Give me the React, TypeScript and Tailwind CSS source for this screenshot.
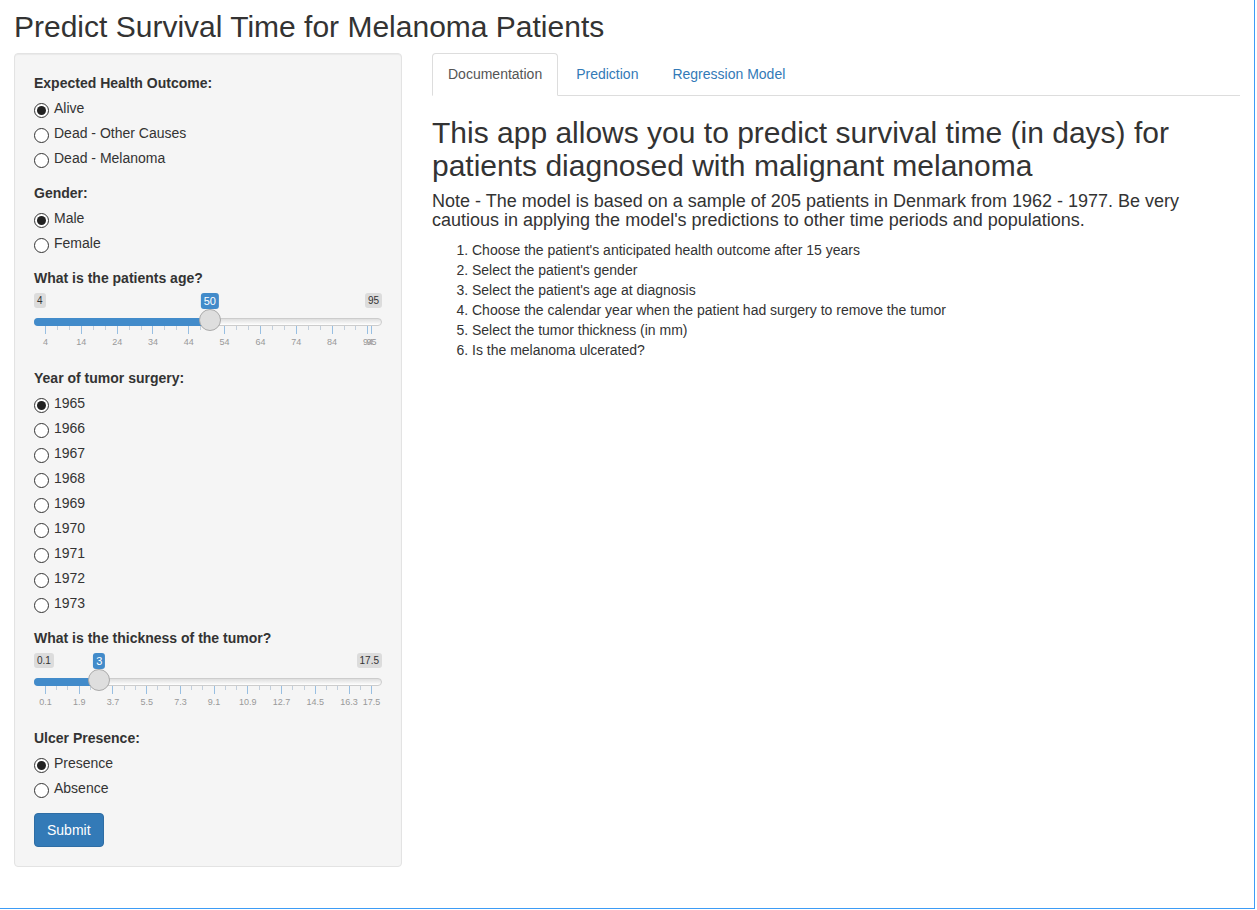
type SliderProps = {
  min: number;
  max: number;
  value: number;
  step: number;
  fmt: (v: number) => string;
};

function Slider({ min, max, value, step, fmt }: SliderProps) {
  const pos = (v: number) => 11 + ((v - min) / (max - min)) * 326;

  const majors: number[] = [];
  for (let v = min; v <= max + 1e-6; v += step) majors.push(v);
  if (Math.abs(majors[majors.length - 1] - max) > 1e-6) majors.push(max);

  const minors: number[] = [];
  for (let i = 0; i < majors.length - 1; i++) {
    for (const k of [1, 2]) {
      const v = majors[i] + (step * k) / 3;
      if (v < majors[i + 1] - 1e-6) minors.push(v);
    }
  }

  return (
    <div className="relative h-[60px] w-[348px]">
      <span className="absolute left-0 top-0 rounded-[3px] bg-black/10 px-[3px] py-px text-[10px] leading-[13px] text-[#333]">
        {fmt(min)}
      </span>
      <span className="absolute right-0 top-0 rounded-[3px] bg-black/10 px-[3px] py-px text-[10px] leading-[13px] text-[#333]">
        {fmt(max)}
      </span>

      <div className="absolute left-0 right-0 top-[25px] h-2 rounded-full border border-[#ccc] bg-gradient-to-b from-[#dedede] to-white" />
      <div
        className="absolute left-0 top-[25px] h-2 rounded-l-full bg-[#428bca]"
        style={{ width: pos(value) }}
      />

      {minors.map((v) => (
        <div
          key={"m" + v}
          className="absolute top-[33px] h-1 w-px bg-[#c3cfdc]"
          style={{ left: Math.round(pos(v)) }}
        />
      ))}
      {majors.map((v) => (
        <div
          key={"M" + v}
          className="absolute top-[33px] h-2 w-px bg-[#98bfe2]"
          style={{ left: Math.round(pos(v)) }}
        />
      ))}
      {majors.map((v) => (
        <span
          key={"t" + v}
          className="absolute top-[45px] -translate-x-1/2 text-[9px] leading-[9px] text-[#999]"
          style={{ left: pos(v) + 0.5 }}
        >
          {fmt(v)}
        </span>
      ))}

      <div
        className="absolute top-4 h-[22px] w-[22px] -translate-x-1/2 rounded-full border border-[#aaa] bg-[#dedede]"
        style={{ left: pos(value) }}
      />
      <span
        className="absolute top-0 -translate-x-1/2 rounded-[3px] bg-[#428bca] px-[3px] py-px text-[11px] leading-[14px] text-white"
        style={{ left: pos(value) }}
      >
        {fmt(value)}
      </span>
    </div>
  );
}

function Radio({ label, checked }: { label: string; checked?: boolean }) {
  return (
    <div className="flex h-5 items-center">
      <span className="mr-[5px] mt-1 flex h-[15px] w-[15px] items-center justify-center rounded-full border border-[#333] bg-white">
        {checked && <span className="h-[9px] w-[9px] rounded-full bg-[#222]" />}
      </span>
      <span className="text-sm leading-5">{label}</span>
    </div>
  );
}

function RadioGroup({ title, options }: { title: string; options: string[] }) {
  return (
    <div className="mb-[15px]">
      <div className="mb-[5px] text-sm font-bold leading-5">{title}</div>
      <div className="flex flex-col gap-[5px]">
        {options.map((o, i) => (
          <Radio key={o} label={o} checked={i === 0} />
        ))}
      </div>
    </div>
  );
}

function SliderGroup({ title, children }: { title: string; children: React.ReactNode }) {
  return (
    <div className="mb-[15px]">
      <div className="mb-[5px] text-sm font-bold leading-5">{title}</div>
      {children}
    </div>
  );
}

export default function App() {
  const years = ["1965", "1966", "1967", "1968", "1969", "1970", "1971", "1972", "1973"];

  return (
    <div className="h-[909px] w-[1255px] border-b border-r border-[#3d9cf6] bg-white pl-[14px] font-['Liberation_Sans',Arial,sans-serif] text-[#333]">
      <h2 className="mb-[10px] pt-[10px] text-[30px] leading-[33px]">
        Predict Survival Time for Melanoma Patients
      </h2>

      <div className="flex items-start">
        <aside className="w-[388px] rounded border border-[#e3e3e3] bg-[#f5f5f5] p-[19px] shadow-[inset_0_1px_1px_rgba(0,0,0,0.05)]">
          <RadioGroup
            title="Expected Health Outcome:"
            options={["Alive", "Dead - Other Causes", "Dead - Melanoma"]}
          />
          <RadioGroup title="Gender:" options={["Male", "Female"]} />
          <SliderGroup title="What is the patients age?">
            <Slider min={4} max={95} value={50} step={10} fmt={(v) => String(Math.round(v))} />
          </SliderGroup>
          <RadioGroup title="Year of tumor surgery:" options={years} />
          <SliderGroup title="What is the thickness of the tumor?">
            <Slider min={0.1} max={17.5} value={3} step={1.8} fmt={(v) => (v === 3 ? "3" : v.toFixed(1))} />
          </SliderGroup>
          <RadioGroup title="Ulcer Presence:" options={["Presence", "Absence"]} />
          <button className="rounded border border-[#2e6da4] bg-[#337ab7] px-3 py-[6px] text-sm leading-5 text-white">
            Submit
          </button>
        </aside>

        <main className="ml-[30px] w-[808px]">
          <nav className="flex border-b border-[#ddd] text-sm leading-5">
            <div className="-mb-px mr-[2px] rounded-t border border-[#ddd] border-b-transparent bg-white px-[15px] py-[10px] text-[#555]">
              Documentation
            </div>
            <div className="mr-[2px] border border-transparent px-[15px] py-[10px] text-[#337ab7]">
              Prediction
            </div>
            <div className="mr-[2px] border border-transparent px-[15px] py-[10px] text-[#337ab7]">
              Regression Model
            </div>
          </nav>

          <h2 className="mt-5 text-[30px] leading-[33px]">
            This app allows you to predict survival time (in days) for patients diagnosed with
            malignant melanoma
          </h2>
          <h4 className="mt-[10px] text-[18px] leading-[19px]">
            Note - The model is based on a sample of 205 patients in Denmark from 1962 - 1977. Be
            very cautious in applying the model's predictions to other time periods and populations.
          </h4>
          <ol className="mt-[10px] list-decimal pl-10 text-sm leading-5">
            <li>Choose the patient's anticipated health outcome after 15 years</li>
            <li>Select the patient's gender</li>
            <li>Select the patient's age at diagnosis</li>
            <li>Choose the calendar year when the patient had surgery to remove the tumor</li>
            <li>Select the tumor thickness (in mm)</li>
            <li>Is the melanoma ulcerated?</li>
          </ol>
        </main>
      </div>
    </div>
  );
}
